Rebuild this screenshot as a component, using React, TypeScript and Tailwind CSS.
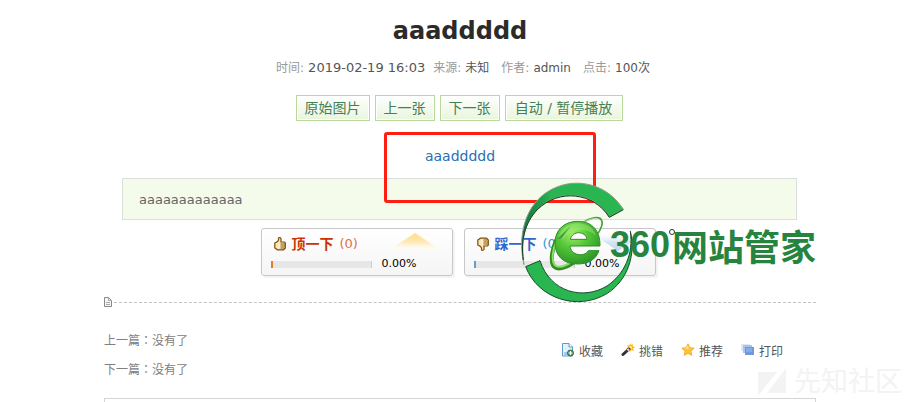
import type { ReactNode } from "react";

const details = [
  { label: "时间:", value: "2019-02-19 16:03", size: "text-[13px]" },
  { label: "来源:", value: "未知", size: "text-xs" },
  { label: "作者:", value: "admin", size: "text-xs" },
  { label: "点击:", value: "100次", size: "text-xs" },
];

const controls = ["原始图片", "上一张", "下一张", "自动 / 暂停播放"];

const siblings = ["上一篇：没有了", "下一篇：没有了"];

function Thumb({ down = false }: { down?: boolean }) {
  return (
    <svg viewBox="0 0 12 14" className={down ? "h-3.5 w-3 -scale-y-100" : "h-3.5 w-3"} aria-hidden="true">
      <path
        d="M.8 6 3.5 4.5 4.5 3V1Q6 .2 7 1.5V5H10.5Q11.5 5.5 11.3 7V11L9.5 12.8H3.5L.8 11Z"
        fill="#fde3b4"
        stroke="#7a4e08"
        strokeWidth="1.2"
      />
      <path d="M6.5 7h4.5M6.5 9h4.5M6.5 11h4" stroke="#7a4e08" strokeWidth=".9" />
      <path d="M4.5 5.5h1V11h-1z" fill="#fff5df" />
    </svg>
  );
}

function Vote({ down = false, label }: { down?: boolean; label: string }) {
  return (
    <button
      type="button"
      className="relative h-12 w-48 rounded-[3px] border border-[#c8c8c8] bg-linear-to-b from-white to-[#f5f5f5] pb-1 text-left shadow-[2px_2px_0_#f3f3f3]"
    >
      <svg viewBox="0 0 54 18" className="absolute top-1 right-2.5 h-[18px] w-[54px]" aria-hidden="true">
        <defs>
          <linearGradient id={down ? "fadeDown" : "fadeUp"} x1="0" x2="0" y1={down ? "1" : "0"} y2={down ? "0" : "1"}>
            <stop stopColor={down ? "#bcd6ef" : "#ffdc86"} />
            <stop offset=".5" stopColor={down ? "#d5e5f4" : "#ffe9b4"} />
            <stop offset="1" stopColor="#ffffff" stopOpacity="0.2" />
          </linearGradient>
        </defs>
        <path d={down ? "M0 0H54L27 18Z" : "M27 0 54 18H0Z"} fill={down ? "url(#fadeDown)" : "url(#fadeUp)"} />
      </svg>
      <span className="flex h-[29px] items-center pl-3">
        <Thumb down={down} />
        <span className={down ? "ml-1.5 text-sm font-bold text-[#3366cc]" : "ml-1.5 text-sm font-bold text-[#cc3300]"}>{label}</span>
        <span className={down ? "ml-1.5 text-[13px] text-[#3399cc]" : "ml-1.5 text-[13px] text-[#dc7148]"}>(0)</span>
      </span>
      <span className="flex h-3 items-center pl-[9px]">
        <span className={down ? "h-[7px] w-[101px] border-x border-r-[#ccc] border-l-2 border-l-[#689acc] bg-[#e7e7e7]" : "h-[7px] w-[101px] border-x border-r-[#ccc] border-l-2 border-l-[#e37e24] bg-[#e7e7e7]"} />
        <span className="ml-2.5 text-[11px] text-black">0.00%</span>
      </span>
    </button>
  );
}

function SaveIcon() {
  return (
    <svg viewBox="0 0 14 14" className="mb-1 size-3.5">
      <path d="M1.5.5H8L11.5 4v9h-10Z" fill="#e2f1ff" stroke="#6399ca" />
      <path d="M8 .5V4h3.5" fill="#fff" stroke="#6399ca" />
      <path d="M3 9h5v3H3z" fill="#9ccaf1" />
      <circle cx="9.5" cy="10" r="3" fill="#529451" stroke="#34713a" />
      <path d="M9.5 8v4m-2-2h4" stroke="#fff" strokeWidth="1.2" />
    </svg>
  );
}

function WandIcon() {
  return (
    <svg viewBox="0 0 14 14" className="mb-1 size-3.5">
      <path d="m9 0 1 2 2-1-.5 2L14 4l-2 1.5L13 8l-2.5-1L9 9 8 6.5 5 6l2-2-1-2 2.5.5Z" fill="#ffb51c" />
      <circle cx="9.5" cy="4.5" r="1.5" fill="#fff59d" />
      <path d="m2 11.5 6-5.5" stroke="#30323b" strokeWidth="3" strokeLinecap="round" />
      <path d="m6.5 7.5 1.5-1.5" stroke="#d8dce8" strokeWidth="2" />
    </svg>
  );
}

function StarIcon() {
  return (
    <svg viewBox="0 0 14 14" className="mb-1 size-3.5">
      <path d="m7 .8 1.8 3.9 4.4.5-3.3 2.9.9 4.3L7 10.2l-3.8 2.2.9-4.3L.8 5.2l4.4-.5Z" fill="#ffc32f" stroke="#f3ad3c" strokeLinejoin="round" />
      <path d="m7 2.5 1 3.2H4Z" fill="#ffe58c" />
    </svg>
  );
}

function PrintIcon() {
  return (
    <svg viewBox="0 0 14 14" className="mb-1 size-3.5">
      <path d="M0 1h9v7H0z" fill="#dce8f8" />
      <path d="M2 2h9v8H2z" fill="#a9c3ea" />
      <path d="M4 4h9v8H4z" fill="#6f99db" />
      <path d="M5 5h6v4H5z" fill="#86ace8" />
    </svg>
  );
}

const actions: { label: string; icon: ReactNode }[] = [
  { label: "收藏", icon: <SaveIcon /> },
  { label: "挑错", icon: <WandIcon /> },
  { label: "推荐", icon: <StarIcon /> },
  { label: "打印", icon: <PrintIcon /> },
];

function BrowserLogo() {
  return (
    <svg viewBox="210 36 342 363" className="absolute top-[182px] left-[416px] h-[121px] w-[114px]" aria-hidden="true">
      <defs>
        <radialGradient id="leaf" cx=".4" cy=".3" r=".75">
          <stop stopColor="#a0ee63" />
          <stop offset=".45" stopColor="#54c638" />
          <stop offset="1" stopColor="#299326" />
        </radialGradient>
        <linearGradient id="ring" x1="0" x2="1">
          <stop stopColor="#16733a" />
          <stop offset=".3" stopColor="#29b650" />
          <stop offset="1" stopColor="#29b650" />
        </linearGradient>
      </defs>
      <path d="M222 284C205 210 218 130 273 80C344 17 462 26 520 118L478 141C430 62 323 54 262 119C222 160 212 216 222 284Z" fill="url(#ring)" stroke="#8a9b90" strokeWidth="3" />
      <path d="M520 119 478 142C431 67 327 55 262 119C222 160 212 216 220 270" fill="none" stroke="#103f20" strokeWidth="3" />
      <path d="M227 290 270 272C301 368 400 391 471 348C524 312 551 251 541 184C558 257 532 331 472 370C382 425 263 385 227 290Z" fill="#29b650" stroke="#174c2b" strokeWidth="3" />
      <path d="M396 160C422 141 449 138 455 151C460 162 451 179 444 190" fill="none" stroke="#4d9d3e" strokeWidth="5" />
      <path d="M397 159C423 143 446 142 450 153C453 162 447 177 442 187" fill="none" stroke="#e2fac7" strokeWidth="2" />
      <path d="M341 178C301 223 297 286 318 294C337 301 364 284 385 267" fill="none" stroke="#328d29" strokeWidth="12" />
      <path d="M337 185C304 226 301 281 320 289C336 295 360 280 377 268" fill="none" stroke="#8bdd5e" strokeWidth="6" />
      <path fillRule="evenodd" d="M450 228H360C362 256 403 263 415 242H447C437 270 414 282 382 282C340 282 315 257 315 219C315 179 344 154 383 154C427 154 451 183 450 228ZM361 208H411C407 182 367 181 361 208Z" fill="url(#leaf)" stroke="#318b2b" strokeWidth="3" />
      <path d="M324 207C332 176 355 160 382 160C411 160 431 174 438 197C411 171 360 175 339 208Z" fill="#b4f386" opacity=".35" />
      <path d="m321 207 41-39-28 38Z" fill="#277f31" opacity=".65" />
    </svg>
  );
}

export default function App() {
  return (
    <div className="overflow-hidden bg-white pl-0.5 font-['DejaVu_Sans','Noto_Sans_CJK_SC',sans-serif]">
      <main className="relative mx-auto max-w-[712px]">
        <h1 className="pt-[15px] text-center text-2xl leading-8 font-bold text-[#2b2b2b]">aaaddddd</h1>

        <dl className="mt-[11px] flex h-5 items-center justify-center gap-3 pl-1.5 text-xs text-[#555]">
          {details.map((item) => (
            <div key={item.label} className="flex items-center gap-1 first:-mr-1">
              <dt className="text-[#999]">{item.label}</dt>
              <dd className={item.size}>{item.value}</dd>
            </div>
          ))}
        </dl>

        <div className="mt-[17px] flex justify-center gap-[5px] pr-0.5">
          {controls.map((label) => (
            <button key={label} type="button" className="h-[26px] border border-[#b8d99b] bg-linear-to-b from-white to-[#e9f5dc] px-2 text-sm leading-6 text-[#428057] inset-shadow-[0_0_0_1px_#ffffff] last:min-w-[118px]">
              {label}
            </button>
          ))}
        </div>

        <div className="mt-[25px] text-center text-sm leading-5">
          <a href="#image" className="text-[#2b6eb2]">aaaddddd</a>
        </div>

        <p className="mr-[19px] ml-[18px] mt-3 h-[42px] border border-[#dcdddd] bg-[#f5fbeb] px-4 text-[13px] leading-[42px] text-[#666]">aaaaaaaaaaaaa</p>

        <div className="mt-2 flex justify-center gap-[11px] pr-1">
          <Vote label="顶一下" />
          <Vote label="踩一下" down />
        </div>

        <div className="mt-5 flex h-3 items-center gap-0.5">
          <svg viewBox="0 0 8 10" className="h-2.5 w-2" aria-hidden="true">
            <path d="M.5.5h4l3 3v6h-7Z" fill="#f5f5f5" stroke="#888" />
            <path d="M4.5.5v3h3M2 5.5h4M2 7.5h4" fill="none" stroke="#aaa" />
          </svg>
          <div className="flex-1 border-t border-dashed border-[#c4c4c4]" />
        </div>

        <div className="mt-[17px] flex justify-between text-xs">
          <div className="font-['Noto_Sans_CJK_TC',sans-serif] leading-[29px] text-[#808080]">
            {siblings.map((line) => (
              <p key={line}>{line}</p>
            ))}
          </div>
          <nav className="mt-[17px] mr-[33px] flex h-5 gap-[18px] text-[#555]">
            {actions.map((action) => (
              <a key={action.label} href="#action" className="flex items-center gap-1">
                {action.icon}
                <span>{action.label}</span>
              </a>
            ))}
          </nav>
        </div>

        <div className="mt-[15px] h-1 border border-b-0 border-[#d5d5d5]" />

        <div className="pointer-events-none absolute top-[132px] left-[280px] h-[71px] w-[212px] rounded-[3px] border-3 border-[#ff1f12]" />
        <BrowserLogo />
        <div className="pointer-events-none absolute top-[225px] left-[506px] flex h-10 items-center text-4xl font-bold whitespace-nowrap text-[#27843f]">
          <span className="font-['Liberation_Sans',sans-serif]">360</span>
          <span className="absolute top-1 left-[59px] size-1.5 rounded-full border border-[#174323]" />
          <span className="ml-0.5 font-['Noto_Sans_CJK_SC',sans-serif]">网站管家</span>
        </div>
        <div className="pointer-events-none absolute top-[364px] left-[654px] flex h-9 items-center gap-2 text-[27px] whitespace-nowrap text-[#f3f3f3]">
          <svg viewBox="0 0 28 28" className="size-7" aria-hidden="true">
            <path d="M0 4h19L0 28ZM28 0v25H9Z" fill="currentColor" />
          </svg>
          <span>先知社区</span>
        </div>
      </main>
    </div>
  );
}
